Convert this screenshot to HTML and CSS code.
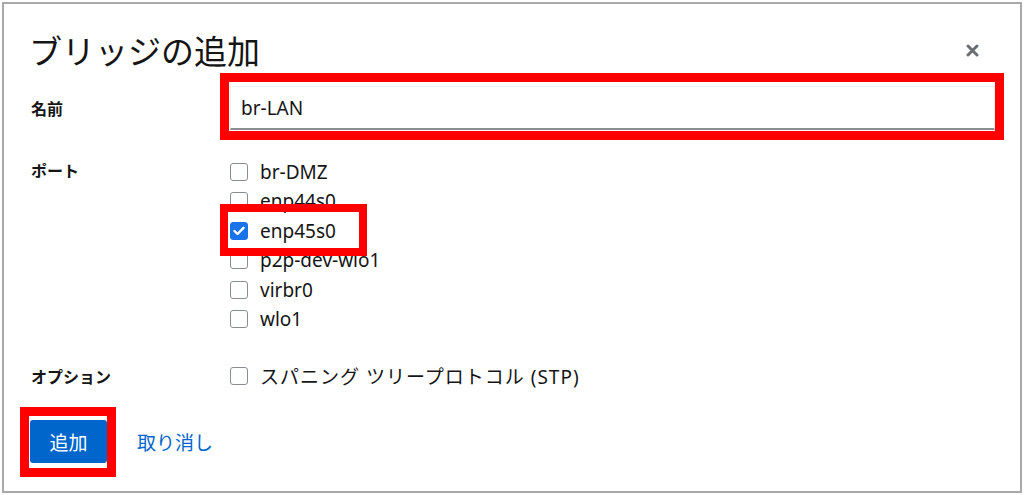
FILE: index.html
```html
<!DOCTYPE html>
<html lang="ja">
<head>
  <meta charset="UTF-8">
  <title>ブリッジの追加</title>
  <link rel="stylesheet" href="styles.css">
</head>
<body>
  <div class="dialog">
    <div class="dialog-header">
      <h1>ブリッジの追加</h1>
      <button class="close-btn" aria-label="閉じる">
        <svg width="13" height="13" viewBox="0 0 13 13"><path d="M2 2 L11 11 M11 2 L2 11" stroke="#6a6e73" stroke-width="3" stroke-linecap="round"/></svg>
      </button>
    </div>

    <div class="form">
      <div class="form-row name-row">
        <label class="form-label" for="name">名前</label>
        <input id="name" class="text-input" type="text" value="br-LAN">
      </div>

      <div class="form-row ports-row">
        <span class="form-label">ポート</span>
        <div class="check-list">
          <label class="check"><span class="box"></span>br-DMZ</label>
          <label class="check"><span class="box"></span>enp44s0</label>
          <label class="check"><span class="box checked"><svg width="12" height="10" viewBox="0 0 12 10"><path d="M1.5 5 L4.5 8 L10.5 1.8" fill="none" stroke="#fff" stroke-width="2.4" stroke-linecap="round" stroke-linejoin="round"/></svg></span>enp45s0</label>
          <label class="check"><span class="box"></span>p2p-dev-wlo1</label>
          <label class="check"><span class="box"></span>virbr0</label>
          <label class="check"><span class="box"></span>wlo1</label>
        </div>
      </div>

      <div class="form-row option-row">
        <span class="form-label">オプション</span>
        <label class="check wide"><span class="box"></span>スパニング ツリープロトコル (STP)</label>
      </div>
    </div>

    <div class="dialog-footer">
      <button class="primary-btn">追加</button>
      <a class="link-btn" href="#">取り消し</a>
    </div>

    <!-- annotation boxes -->
    <div class="mark mark-name"></div>
    <div class="mark mark-port"></div>
    <div class="mark mark-add"></div>
  </div>
</body>
</html>
```

FILE: styles.css
```css
:root {
  --text-color: #151515;
  --muted: #6a6e73;
  --blue: #0066cc;
  --mark: #ff0000;
}
* {
  box-sizing: border-box;
  margin: 0;
  padding: 0;
}
body {
  font-family: 'Noto Sans', 'Noto Sans CJK JP', sans-serif;
  color: var(--text-color);
  background: #fff;
  padding: 2px;
  height: 495px;
  overflow: hidden;
}
.dialog {
  position: relative;
  height: 491px;
  border: 2px solid #a9a9a9;
  padding: 22px 25px 0 26px;
}
.dialog-header {
  display: flex;
  justify-content: space-between;
  align-items: center;
  height: 48px;
  margin-bottom: 12px;
}
h1 {
  font-family: 'Noto Sans CJK JP', sans-serif;
  font-size: 33px;
  font-weight: 400;
  margin-left: -1px;
}
.close-btn {
  background: none;
  border: none;
  margin-right: 16px;
  margin-top: 1px;
  display: flex;
}
.form-row {
  display: grid;
  grid-template-columns: 200px 1fr;
}
.form-label {
  font-family: 'Noto Sans CJK JP', sans-serif;
  font-weight: 700;
  font-size: 16px;
  padding-left: 1px;
}
.name-row {
  align-items: center;
  height: 44px;
  margin-bottom: 27px;
}
.text-input {
  font-family: inherit;
  font-size: 19px;
  color: var(--text-color);
  height: 44px;
  padding: 0 10px;
  border: 1px solid #f0f0f0;
  border-bottom: 2px solid #8a8d90;
  outline: none;
  width: 100%;
}
.ports-row .form-label {
  line-height: 26px;
}
.check-list {
  display: flex;
  flex-direction: column;
}
.check {
  display: flex;
  align-items: center;
  gap: 12px;
  font-size: 19px;
  height: 29.5px;
}
.check.wide {
  letter-spacing: 1px;
}
.box {
  width: 18px;
  height: 18px;
  border: 1px solid #8a8d90;
  border-radius: 3px;
  flex-shrink: 0;
  display: flex;
  align-items: center;
  justify-content: center;
  background: #fff;
}
.box.checked {
  background: #1a73e8;
  border-color: #1a73e8;
}
.option-row {
  align-items: center;
  margin-top: 27px;
}
.dialog-footer {
  display: flex;
  align-items: center;
  gap: 30px;
  margin-top: 29px;
}
.primary-btn {
  font-family: 'Noto Sans CJK JP', sans-serif;
  font-size: 19px;
  color: #fff;
  background: var(--blue);
  border: none;
  border-radius: 3px;
  width: 77px;
  height: 43px;
}
.link-btn {
  font-family: 'Noto Sans CJK JP', sans-serif;
  font-size: 19px;
  color: var(--blue);
  text-decoration: none;
}
.mark {
  position: absolute;
  border: 9px solid var(--mark);
  pointer-events: none;
}
.mark-name {
  left: 216px;
  top: 69px;
  width: 784px;
  height: 67px;
}
.mark-port {
  left: 216px;
  top: 200px;
  width: 147px;
  height: 52px;
  border-width: 8px;
}
.mark-add {
  left: 16px;
  top: 403px;
  width: 96px;
  height: 70px;
}
```
